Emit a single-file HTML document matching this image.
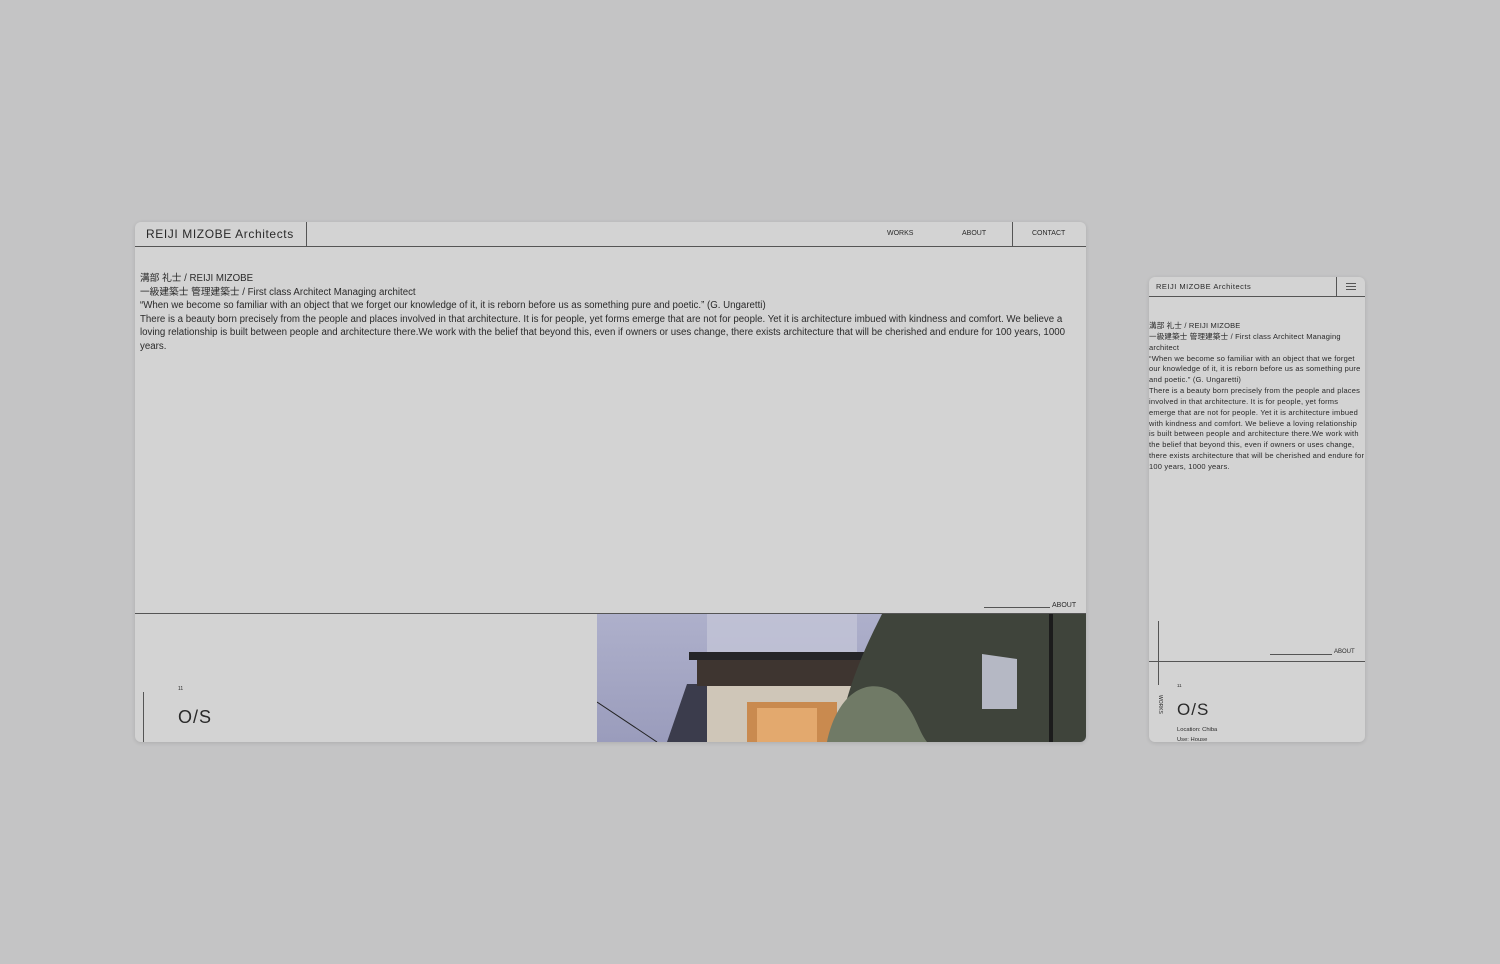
<!DOCTYPE html>
<html><head><meta charset="utf-8"><style>
*{margin:0;padding:0;box-sizing:border-box}
body{width:1500px;height:964px;background:#c4c4c5;position:relative;overflow:hidden;font-family:"Liberation Sans","Noto Sans CJK JP",sans-serif;color:#2a2a2a}
.p{position:absolute;background:#d3d3d3;overflow:hidden;box-shadow:0 1px 4px rgba(0,0,0,.12)}
.abs{position:absolute}
.line{position:absolute;background:#555}
</style></head><body>
<div class="p" style="left:135px;top:222px;width:951px;height:520px;border-radius:6px">
  <div class="abs" style="left:0;top:0;width:951px;height:25px;border-bottom:1px solid #555"></div>
  <div class="abs" style="left:171px;top:0;width:1px;height:25px;background:#555"></div>
  <div class="abs" style="left:877px;top:0;width:1px;height:25px;background:#555"></div>
  <div class="abs" style="left:11px;top:5px;font-size:12px;letter-spacing:.6px">REIJI MIZOBE Architects</div>
  <div class="abs" style="left:752px;top:8px;font-size:7px">WORKS</div>
  <div class="abs" style="left:827px;top:8px;font-size:7px">ABOUT</div>
  <div class="abs" style="left:897px;top:8px;font-size:7px">CONTACT</div>
  <div class="abs" style="left:5px;top:50px;width:930px;font-size:9.7px;line-height:13.6px">
    溝部 礼士 / REIJI MIZOBE<br>一級建築士 管理建築士 / First class Architect Managing architect<br>“When we become so familiar with an object that we forget our knowledge of it, it is reborn before us as something pure and poetic.” (G. Ungaretti)<br>There is a beauty born precisely from the people and places involved in that architecture. It is for people, yet forms emerge that are not for people. Yet it is architecture imbued with kindness and comfort. We believe a loving relationship is built between people and architecture there.We work with the belief that beyond this, even if owners or uses change, there exists architecture that will be cherished and endure for 100 years, 1000 years.
  </div>
  <div class="line" style="left:849px;top:385px;width:66px;height:1px"></div>
  <div class="abs" style="left:917px;top:380px;font-size:7px">ABOUT</div>
  <div class="line" style="left:0;top:391px;width:951px;height:1px"></div>
  <div class="line" style="left:8px;top:470px;width:1px;height:50px"></div>
  <div class="abs" style="left:43px;top:464px;font-size:5px">11</div>
  <div class="abs" style="left:43px;top:485px;font-size:18px;letter-spacing:1px">O/S</div>
  <svg class="abs" style="left:462px;top:392px" width="489" height="128" viewBox="0 0 489 128">
    <defs><linearGradient id="s" x1="0" y1="0" x2="0" y2="1"><stop offset="0" stop-color="#aeb0cb"/><stop offset="1" stop-color="#9a9cbc"/></linearGradient></defs>
    <rect width="489" height="128" fill="url(#s)"/>
    <rect x="110" y="0" width="150" height="60" fill="#c6c7d8" opacity=".7"/>
    <polygon points="70,128 90,70 115,70 115,128" fill="#3b3c4c"/>
    <rect x="92" y="38" width="250" height="8" fill="#252528"/>
    <rect x="100" y="46" width="240" height="26" fill="#3e3530"/>
    <rect x="110" y="72" width="200" height="56" fill="#cfc6b8"/>
    <rect x="150" y="88" width="90" height="40" fill="#c98a4f"/>
    <rect x="160" y="94" width="60" height="34" fill="#e3a96e"/>
    <line x1="0" y1="88" x2="60" y2="128" stroke="#222" stroke-width="1"/>
    <path d="M240 128 C250 70 270 30 285 0 L489 0 L489 128 Z" fill="#3f443b"/>
    <path d="M230 128 C240 80 270 60 300 80 C320 100 320 115 330 128Z" fill="#707a66"/>
    <path d="M385 40 L420 45 L420 95 L385 95Z" fill="#b5b8c4"/>
    <rect x="452" y="0" width="4" height="128" fill="#1c1c1c"/>
  </svg>
</div>
<div class="p" style="left:1149px;top:277px;width:216px;height:465px;border-radius:6px">
  <div class="abs" style="left:0;top:0;width:216px;height:20px;border-bottom:1px solid #555"></div>
  <div class="abs" style="left:187px;top:0;width:1px;height:20px;background:#555"></div>
  <div class="abs" style="left:7px;top:5px;font-size:7.5px;letter-spacing:.5px">REIJI MIZOBE Architects</div>
  <div class="abs" style="left:197px;top:6px;width:10px;height:1px;background:#555;box-shadow:0 3px 0 #555,0 6px 0 #555"></div>
  <div class="abs" style="left:0;top:44px;width:216px;font-size:7.5px;letter-spacing:.2px;line-height:10.85px">
    溝部 礼士 / REIJI MIZOBE<br>一級建築士 管理建築士 / First class Architect Managing architect<br>“When we become so familiar with an object that we forget our knowledge of it, it is reborn before us as something pure and poetic.” (G. Ungaretti)<br>There is a beauty born precisely from the people and places involved in that architecture. It is for people, yet forms emerge that are not for people. Yet it is architecture imbued with kindness and comfort. We believe a loving relationship is built between people and architecture there.We work with the belief that beyond this, even if owners or uses change, there exists architecture that will be cherished and endure for 100 years, 1000 years.
  </div>
  <div class="line" style="left:121px;top:377px;width:62px;height:1px"></div>
  <div class="abs" style="left:185px;top:372px;font-size:6px">ABOUT</div>
  <div class="line" style="left:0;top:384px;width:216px;height:1px"></div>
  <div class="line" style="left:9px;top:344px;width:1px;height:64px"></div>
  <div class="abs" style="left:14px;top:418px;font-size:5px;transform:rotate(90deg);transform-origin:left top">WORKS</div>
  <div class="abs" style="left:28px;top:406px;font-size:4.5px">11</div>
  <div class="abs" style="left:28px;top:423px;font-size:17px;letter-spacing:1px">O/S</div>
  <div class="abs" style="left:28px;top:448px;font-size:5.8px;line-height:10px">Location: Chiba<br>Use: House</div>
</div>
</body></html>
